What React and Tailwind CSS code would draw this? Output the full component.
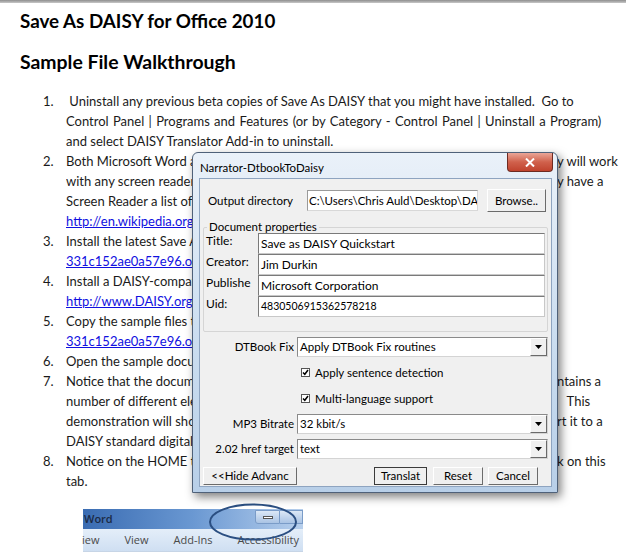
import React from "react";

const rows = [
  { n: "1.", l: "\u00a0Uninstall any previous beta copies of Save As DAISY that you might have installed.\u00a0\u00a0Go to" },
  { l: "Control Panel | Programs and Features (or by Category - Control Panel | Uninstall a Program)", ws: "[word-spacing:1px]" },
  { l: "and select DAISY Translator Add-in to uninstall." },
  { n: "2.", l: "Both Microsoft Word and the Save As DAISY add-in are designed for accessibility and", r: "y will work" },
  { l: "with any screen reader application. If you do not already have", r: "y have a" },
  { l: "Screen Reader a list of them can be found at" },
  { l: "http://en.wikipedia.org/wiki/Screen_reader", link: true },
  { n: "3.", l: "Install the latest Save As DAISY add-in from" },
  { l: "331c152ae0a57e96.office.net", link: true },
  { n: "4.", l: "Install a DAISY-compatible reader such as those listed at" },
  { l: "http://www.DAISY.org/tools", link: true },
  { n: "5.", l: "Copy the sample files to your computer from" },
  { l: "331c152ae0a57e96.office.net", link: true },
  { n: "6.", l: "Open the sample document in Microsoft Word." },
  { n: "7.", l: "Notice that the document is a standard Word document that contains a", r: "ntains a" },
  { l: "number of different elements such as images, tables and lists.", r: "\u00a0\u00a0\u00a0This" },
  { l: "demonstration will show you how to take the document and convert it", r: "rt it to a" },
  { l: "DAISY standard digital talking book." },
  { n: "8.", l: "Notice on the HOME tab the Save As DAISY group, click on this", r: "k on this" },
  { l: "tab." },
];

function Combo({ value }) {
  return (
    <div className="flex h-[20px] flex-1 items-stretch border border-[#8a8a8a] border-r-[#d4d4d4] border-b-[#d4d4d4] bg-white">
      <div className="flex flex-1 items-center pl-[2px] text-[11.5px] leading-none text-black">{value}</div>
      <div className="flex w-[17px] items-center justify-center border-l border-t border-white border-r border-r-[#6a6a6a] border-b border-b-[#6a6a6a] bg-[#f0f0f0]">
        <svg width="7" height="4" viewBox="0 0 7 4"><path d="M0 0h7L3.5 4z" fill="#000" /></svg>
      </div>
    </div>
  );
}

function Field({ value, small }) {
  return (
    <div className={`flex h-[21px] flex-1 items-center border border-[#7a7a7a] border-r-[#c8c8c8] border-b-[#c8c8c8] bg-white pl-[2px] ${small ? "text-[10.5px]" : "text-[12px]"} leading-none text-black`}>
      {value}
    </div>
  );
}

function Btn({ children, className = "", def }) {
  return (
    <div className={`flex items-center justify-center border ${def ? "border-[#3a3a3a]" : "border-white border-r-[#6b6b6b] border-b-[#6b6b6b]"} bg-[#efefef] text-[11.5px] leading-none text-black ${className}`}>
      {children}
    </div>
  );
}

function Check({ label }) {
  return (
    <div className="flex items-center gap-[5px]">
      <div className="flex h-[9px] w-[9px] items-center justify-center border border-[#555] bg-white">
        <svg width="7" height="7" viewBox="0 0 7 7"><path d="M1 3.5l1.8 1.8L6 1" stroke="#000" strokeWidth="1.5" fill="none" /></svg>
      </div>
      <span className="text-[11.5px] leading-none text-black">{label}</span>
    </div>
  );
}

export default function App() {
  return (
    <div className="relative h-[555px] w-[626px] overflow-hidden bg-white font-['Lato',sans-serif] text-[#1a1a1a]">
      <div className="h-[3px] bg-gradient-to-b from-[#8e8e8e] to-[#c8c8c8]" />
      <div className="pl-[20px]">
        <h1 className="mt-[6px] text-[18.8px] font-bold leading-[24px] text-black">Save As DAISY for Office 2010</h1>
        <h2 className="mt-[17px] text-[19.4px] font-bold leading-[24px] text-black">Sample File Walkthrough</h2>
      </div>
      <div className="mt-[17px] pl-[43px]">
        {rows.map((r, i) =>
          r.r ? (
            <div key={i} className="grid h-[20px] grid-cols-[23px_491px_auto] text-[13px] leading-[20px]">
              <span>{r.n || ""}</span>
              <span className={`overflow-hidden whitespace-nowrap ${r.ws || ""}`}>{r.l}</span>
              <span className="whitespace-nowrap">{r.r}</span>
            </div>
          ) : (
            <div key={i} className="flex h-[20px] text-[13px] leading-[20px]">
              <span className="w-[23px] shrink-0">{r.n || ""}</span>
              <span className={`whitespace-nowrap ${r.ws || ""} ${r.link ? "text-[#1010e0] underline" : ""}`}>{r.l}</span>
            </div>
          )
        )}
      </div>

      {/* Word screenshot */}
      <div className="relative ml-[83px] mt-[18px] w-[220px]">
        <div className="flex h-[20px] items-center justify-between bg-gradient-to-r from-[#3a6cb2] via-[#6a98d2] to-[#b7cfec] pl-[1px]">
          <span className="font-['Open_Sans',sans-serif] text-[11px] font-semibold text-[#1b2a44]">Word</span>
          <div className="flex h-[18px] items-start">
            <div className="flex h-[14px] w-[25px] items-center justify-center rounded-bl-[3px] border border-[#7a9cc8] bg-gradient-to-b from-[#dce8f6] to-[#a9c3e4]">
              <div className="h-[3px] w-[10px] border border-[#555] bg-white" />
            </div>
            <div className="h-[14px] w-[23px] border border-l-0 border-[#7a9cc8] bg-gradient-to-b from-[#dce8f6] to-[#a9c3e4]" />
          </div>
        </div>
        <div className="flex h-[22px] items-center gap-[25px] bg-gradient-to-b from-[#e4eef9] to-[#cfdff2] font-['Open_Sans',sans-serif] text-[11px] text-[#4a4a4a]">
          <span className="-ml-[1px]">iew</span>
          <span>View</span>
          <span>Add-Ins</span>
          <span>Accessibility</span>
        </div>
        <div className="h-[10px] border-t border-[#c7d5e6] bg-white" />
        <svg className="absolute left-[125px] top-[-7px]" width="90" height="40" viewBox="0 0 90 40">
          <ellipse cx="45" cy="20" rx="43" ry="17.5" fill="none" stroke="#2b4f82" strokeWidth="2" />
        </svg>
      </div>

      {/* Dialog */}
      <div className="absolute left-[192px] top-[152px] flex h-[341px] w-[366px] flex-col rounded-t-[6px] border border-[#4f6179] bg-gradient-to-b from-[#eaf1f9] via-[#cddff1] to-[#b8cfe8] shadow-[3px_4px_10px_rgba(0,0,0,0.5)]">
        <div className="flex h-[25px] items-start justify-between">
          <span className="pl-[7px] pt-[9px] text-[11.5px] leading-none text-black">Narrator-DtbookToDaisy</span>
          <div className="mr-[4px] flex h-[19px] w-[46px] items-center justify-center rounded-b-[4px] border border-t-0 border-[#6e2b22] bg-gradient-to-b from-[#e9a597] via-[#d0614c] to-[#c0432e]">
            <svg width="10" height="9" viewBox="0 0 10 9"><path d="M1 0.5l8 8M9 0.5l-8 8" stroke="#fff" strokeWidth="2" /></svg>
          </div>
        </div>
        <div className="mb-[5px] ml-[6px] mr-[5px] flex flex-1 flex-col border border-[#8ea4c0] bg-[#f0f0f0] px-[3px] text-[11.5px] leading-none text-black">
          <div className="mt-[10px] flex items-center">
            <span className="w-[104px] pl-[5px]">Output directory</span>
            <div className="flex h-[21px] w-[171px] items-center overflow-hidden whitespace-nowrap border border-[#9a9a9a] border-r-[#d8d8d8] border-b-[#d8d8d8] bg-white pl-[1px] text-[11.5px]">C:\Users\Chris Auld\Desktop\DAI</div>
            <Btn className="ml-[9px] h-[23px] w-[59px]">Browse..</Btn>
          </div>
          <div className="relative mt-[15px] h-[105px] rounded-[2px] border border-[#d5d5d5] px-[2px] pt-[5px]">
            <span className="absolute left-[3px] top-[-7px] bg-[#f0f0f0] px-[2px]">Document properties</span>
            <div className="flex flex-col">
              {[
                ["Title:", "Save as DAISY Quickstart"],
                ["Creator:", "Jim Durkin"],
                ["Publishe", "Microsoft Corporation"],
                ["Uid:", "4830506915362578218"],
              ].map(([k, v], i) => (
                <div key={i} className="flex items-start">
                  <span className="w-[52px] pt-[2px] text-[12px]">{k}</span>
                  <Field value={v} small={i === 3} />
                </div>
              ))}
            </div>
          </div>
          <div className="mt-[5px] flex items-center">
            <span className="w-[94px] pr-[3px] text-right">DTBook Fix</span>
            <Combo value="Apply DTBook Fix routines" />
          </div>
          <div className="ml-[98px] mt-[10px]"><Check label="Apply sentence detection" /></div>
          <div className="ml-[98px] mt-[14px]"><Check label="Multi-language support" /></div>
          <div className="mt-[10px] flex items-center">
            <span className="w-[94px] pr-[3px] text-right">MP3 Bitrate</span>
            <Combo value="32 kbit/s" />
          </div>
          <div className="mt-[5px] flex items-center">
            <span className="w-[94px] pr-[3px] text-right">2.02 href target</span>
            <Combo value="text" />
          </div>
          <div className="mt-[8px] flex items-center">
            <Btn className="h-[18px] w-[94px]">&lt;&lt;Hide Advanc</Btn>
            <Btn def className="ml-[77px] h-[18px] w-[53px]">Translat</Btn>
            <Btn className="ml-[6px] h-[18px] w-[50px]">Reset</Btn>
            <Btn className="ml-[5px] h-[18px] w-[50px]">Cancel</Btn>
          </div>
        </div>
      </div>
    </div>
  );
}
